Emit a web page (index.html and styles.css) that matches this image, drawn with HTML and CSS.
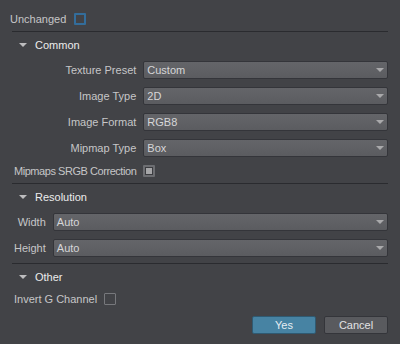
FILE: index.html
```html
<!DOCTYPE html>
<html lang="en">

<head>
    <meta charset="UTF-8">
    <title>Texture Import</title>
    <link rel="stylesheet" href="styles.css">
</head>

<body>
    <div class="dialog">
        <div class="top">
            <span class="label">Unchanged</span>
            <span class="check blue"></span>
        </div>

        <div class="section">
            <div class="head"><i class="tri"></i>Common</div>
            <div class="grid">
                <span class="label">Texture Preset</span>
                <div class="combo">Custom<i class="arrow"></i></div>
                <span class="label">Image Type</span>
                <div class="combo">2D<i class="arrow"></i></div>
                <span class="label">Image Format</span>
                <div class="combo">RGB8<i class="arrow"></i></div>
                <span class="label">Mipmap Type</span>
                <div class="combo">Box<i class="arrow"></i></div>
                <span class="label long">Mipmaps SRGB Correction</span>
                <div class="checkrow"><span class="check part"><i></i></span></div>
            </div>
        </div>

        <div class="section">
            <div class="head"><i class="tri"></i>Resolution</div>
            <div class="grid">
                <span class="label">Width</span>
                <div class="combo">Auto<i class="arrow"></i></div>
                <span class="label">Height</span>
                <div class="combo">Auto<i class="arrow"></i></div>
            </div>
        </div>

        <div class="section last">
            <div class="head"><i class="tri"></i>Other</div>
            <div class="grid">
                <span class="label">Invert G Channel</span>
                <div class="checkrow"><span class="check"></span></div>
            </div>
        </div>

        <div class="buttons">
            <button class="btn yes">Yes</button>
            <button class="btn">Cancel</button>
        </div>
    </div>
</body>

</html>
```

FILE: styles.css
```css
body {
    margin: 0;
    background: #424347;
    font: 11px "Liberation Sans", Arial, sans-serif;
    color: #c6c6c8;
}

.dialog {
    width: 376px;
    height: 344px;
    padding: 0 12px;
}

.top {
    display: flex;
    align-items: center;
    gap: 8px;
    height: 25px;
    padding-top: 6px;
    margin-left: -2px;
}

.section {
    border-top: 1px solid #2a2b2f;
}

.head {
    display: flex;
    align-items: center;
    gap: 8px;
    height: 26px;
    padding-left: 7px;
    color: #ececec;
}

.tri {
    width: 0;
    height: 0;
    border-left: 4px solid transparent;
    border-right: 4px solid transparent;
    border-top: 4px solid #bdbdbf;
}

.grid {
    display: grid;
    grid-template-columns: auto 1fr;
    column-gap: 7px;
    row-gap: 8px;
    align-items: center;
    padding: 3px 0 6px 2px;
}

.grid .label {
    text-align: right;
    white-space: nowrap;
}

.grid .long {
    letter-spacing: -0.45px;
}

.combo {
    position: relative;
    height: 16px;
    line-height: 16px;
    padding-left: 3px;
    border: 1px solid #34353a;
    border-radius: 2px;
    background: linear-gradient(#646569, #5b5c60);
    color: #d6d6d8;
}

.arrow {
    position: absolute;
    right: 3px;
    top: 6px;
    width: 0;
    height: 0;
    border-left: 4px solid transparent;
    border-right: 4px solid transparent;
    border-top: 4px solid #a9a9ab;
}

.checkrow {
    display: flex;
    height: 12px;
}

.check {
    box-sizing: border-box;
    display: block;
    width: 12px;
    height: 12px;
    border: 1px solid #77787c;
    border-radius: 1px;
}

.check.blue {
    border: 2px solid #336d9b;
}

.check.part {
    border: 2px solid #6d6e72;
    padding: 1px;
    background: #3b3c40;
}

.check.part i {
    display: block;
    width: 6px;
    height: 6px;
    background: #a6a6a8;
}

.last .grid {
    padding-bottom: 0;
}

.buttons {
    display: flex;
    justify-content: flex-end;
    gap: 8px;
    margin-top: 11px;
}

.btn {
    width: 64px;
    height: 18px;
    padding: 0;
    border: 1px solid #34353a;
    border-radius: 2px;
    background: #595a5e;
    font: 11px "Liberation Sans", Arial, sans-serif;
    color: #e2e2e4;
}

.btn.yes {
    background: #4783a3;
    border-color: #2f5a72;
    color: #e6eef3;
}
```
